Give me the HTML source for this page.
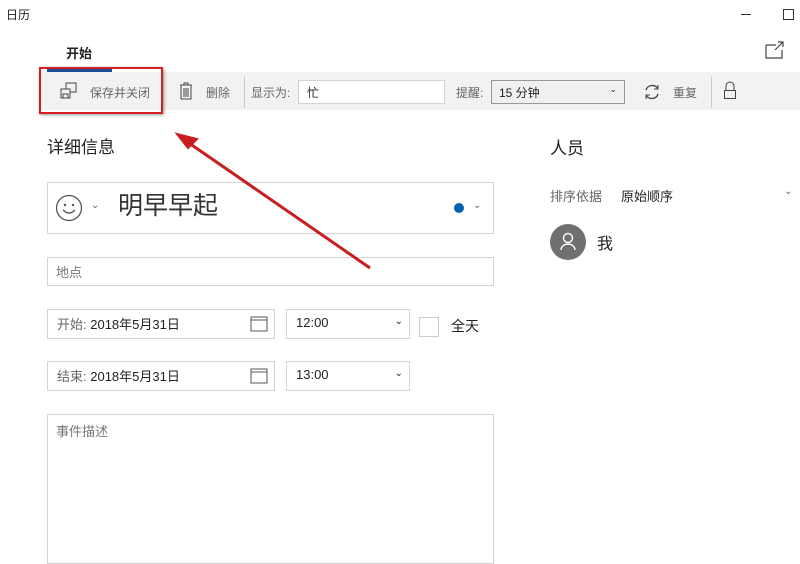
<!DOCTYPE html><html><head><meta charset="utf-8"><style>
body{margin:0;width:800px;height:550px;background:#fff;position:relative;overflow:hidden;font-family:"Liberation Sans","Noto Sans CJK SC",sans-serif;color:#222}
.a{position:absolute}
.box{position:absolute;border:1px solid #d4d4d4;background:#fff;box-sizing:border-box}
.t{font-size:13px}
.g{color:#666}
</style></head><body>
<div class="a t" style="left:6px;top:6px;font-size:12px">日历</div>
<div class="a" style="left:741px;top:14px;width:10px;height:1px;background:#333"></div>
<div class="a" style="left:783px;top:9px;width:9px;height:9px;border:1px solid #333"></div>
<div class="a" style="left:66px;top:43px;font-size:13px;font-weight:bold">开始</div>
<svg class="a" style="left:765px;top:41px" width="20" height="18"><path d="M1 4h10M1 4v13h16V9" fill="none" stroke="#444" stroke-width="1.2"/><path d="M10 9L18 1M13 1h5v5" fill="none" stroke="#444" stroke-width="1.2"/></svg>
<div class="a" style="left:39px;top:72px;width:761px;height:38px;background:#f2f2f2"></div>
<div class="a" style="left:47px;top:69px;width:65px;height:3px;background:#1f4e99"></div>
<svg class="a" style="left:60px;top:82px" width="18" height="18"><rect x="6" y="1" width="10" height="9" fill="none" stroke="#444"/><rect x="1" y="7" width="9" height="9" fill="#f2f2f2" stroke="#444"/><rect x="3" y="12" width="5" height="4" fill="none" stroke="#444"/></svg>
<div class="a t g" style="left:90px;top:84px;font-size:12px">保存并关闭</div>
<svg class="a" style="left:179px;top:82px" width="14" height="18"><path d="M1 3h12M5 3V1h4v2M2 3v14h10V3M5 6v9M7 6v9M9 6v9" fill="none" stroke="#444"/></svg>
<div class="a g" style="left:206px;top:84px;font-size:12px">删除</div>
<div class="a" style="left:244px;top:76px;width:1px;height:32px;background:#ccc"></div>
<div class="a g" style="left:251px;top:84px;font-size:12px">显示为:</div>
<div class="box" style="left:298px;top:80px;width:147px;height:24px;padding:3px 8px;font-size:12px">忙</div>
<div class="a g" style="left:456px;top:84px;font-size:12px">提醒:</div>
<div class="box" style="left:491px;top:80px;width:134px;height:24px;padding:3px 7px;font-size:12px;background:#f0f0f0;border-color:#999">15 分钟<span style="position:absolute;right:7px;top:3px;font-size:9px">⌄</span></div>
<svg class="a" style="left:643px;top:83px" width="18" height="18"><path d="M3 7A6.5 6.5 0 0 1 15 6M15 11A6.5 6.5 0 0 1 3 12" fill="none" stroke="#444" stroke-width="1.3"/><path d="M15 2v4h-4M3 16v-4h4" fill="none" stroke="#444"/></svg>
<div class="a g" style="left:673px;top:84px;font-size:12px">重复</div>
<div class="a" style="left:711px;top:76px;width:1px;height:32px;background:#ccc"></div>
<svg class="a" style="left:723px;top:81px" width="14" height="20"><path d="M3 9V5a4 4 0 0 1 8 0v4" fill="none" stroke="#444"/><rect x="1.5" y="9.5" width="11" height="8" fill="none" stroke="#444"/></svg>
<div class="a" style="left:39px;top:67px;width:120px;height:43px;border:2.5px solid #d42020;box-shadow:1px 1px 3px rgba(0,0,0,.4)"></div>
<div class="a" style="left:47px;top:133px;font-size:17px">详细信息</div>
<div class="a" style="left:550px;top:134px;font-size:17px">人员</div>
<div class="a g" style="left:550px;top:186px;font-size:13px">排序依据</div>
<div class="a" style="left:621px;top:186px;font-size:13px">原始顺序</div>
<div class="a g" style="left:784px;top:186px;font-size:10px">⌄</div>
<div class="a" style="left:550px;top:224px;width:36px;height:36px;border-radius:50%;background:#707070"></div>
<svg class="a" style="left:559px;top:231px" width="18" height="20"><circle cx="9" cy="7" r="4.5" fill="none" stroke="#fff" stroke-width="1.4"/><path d="M2 19a7 6 0 0 1 14 0" fill="none" stroke="#fff" stroke-width="1.4"/></svg>
<div class="a" style="left:597px;top:230px;font-size:16px">我</div>
<div class="box" style="left:47px;top:182px;width:447px;height:52px"></div>
<svg class="a" style="left:55px;top:194px" width="28" height="28"><circle cx="14" cy="14" r="12.5" fill="none" stroke="#555" stroke-width="1.3"/><circle cx="10" cy="11" r="1.2" fill="#555"/><circle cx="18" cy="11" r="1.2" fill="#555"/><path d="M8 16q6 6 12 0" fill="none" stroke="#555" stroke-width="1.3"/></svg>
<div class="a g" style="left:91px;top:200px;font-size:10px">⌄</div>
<div class="a" style="left:118px;top:186px;font-size:25px;color:#333">明早早起</div>
<div class="a" style="left:454px;top:203px;width:10px;height:10px;border-radius:50%;background:#0063b1"></div>
<div class="a g" style="left:473px;top:200px;font-size:10px">⌄</div>
<div class="box" style="left:47px;top:257px;width:447px;height:29px;padding:4px 8px;font-size:13px;color:#777">地点</div>
<div class="box" style="left:47px;top:309px;width:228px;height:30px;padding:4px 9px;font-size:13px"><span class="g">开始:</span> 2018年5月31日</div>
<svg class="a" style="left:250px;top:315px" width="18" height="18"><rect x="1" y="2" width="16" height="14" fill="none" stroke="#555"/><path d="M1 5h16" stroke="#555"/></svg>
<div class="box" style="left:286px;top:309px;width:124px;height:30px;padding:5px 9px;font-size:13px">12:00<span style="position:absolute;right:6px;top:6px;font-size:10px">⌄</span></div>
<div class="a" style="left:419px;top:317px;width:18px;height:18px;border:1px solid #ccc"></div>
<div class="a" style="left:451px;top:316px;font-size:14px">全天</div>
<div class="box" style="left:47px;top:361px;width:228px;height:30px;padding:4px 9px;font-size:13px"><span class="g">结束:</span> 2018年5月31日</div>
<svg class="a" style="left:250px;top:367px" width="18" height="18"><rect x="1" y="2" width="16" height="14" fill="none" stroke="#555"/><path d="M1 5h16" stroke="#555"/></svg>
<div class="box" style="left:286px;top:361px;width:124px;height:30px;padding:5px 9px;font-size:13px">13:00<span style="position:absolute;right:6px;top:6px;font-size:10px">⌄</span></div>
<div class="box" style="left:47px;top:414px;width:447px;height:150px;padding:6px 8px;font-size:13px;color:#777">事件描述</div>
<svg class="a" style="left:0;top:0" width="800" height="550"><line x1="370" y1="268" x2="186" y2="141" stroke="#c81e1e" stroke-width="3"/><path d="M177 134L197 139L188 148Z" fill="#c81e1e" stroke="#c81e1e" stroke-width="2"/></svg>
</body></html>
